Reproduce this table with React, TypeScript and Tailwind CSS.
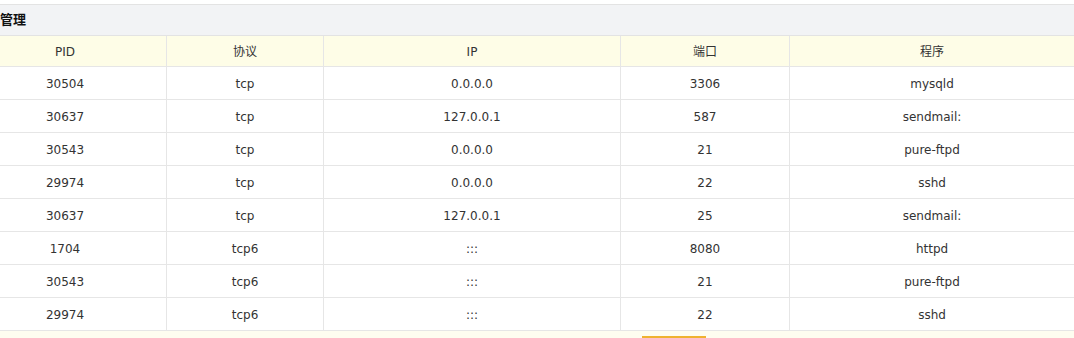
import React from 'react';

const rows = [
  { pid: '30504', proto: 'tcp', ip: '0.0.0.0', port: '3306', prog: 'mysqld' },
  { pid: '30637', proto: 'tcp', ip: '127.0.0.1', port: '587', prog: 'sendmail:' },
  { pid: '30543', proto: 'tcp', ip: '0.0.0.0', port: '21', prog: 'pure-ftpd' },
  { pid: '29974', proto: 'tcp', ip: '0.0.0.0', port: '22', prog: 'sshd' },
  { pid: '30637', proto: 'tcp', ip: '127.0.0.1', port: '25', prog: 'sendmail:' },
  { pid: '1704', proto: 'tcp6', ip: ':::', port: '8080', prog: 'httpd' },
  { pid: '30543', proto: 'tcp6', ip: ':::', port: '21', prog: 'pure-ftpd' },
  { pid: '29974', proto: 'tcp6', ip: ':::', port: '22', prog: 'sshd' },
];

const cols = 'grid grid-cols-[202px_157px_297px_169px_1fr]';
const cell = 'flex items-center justify-center pt-[2px] border-l border-[#e6e6e6] first:border-l-0';

export default function App() {
  return (
    <div
      className="w-[1074px] h-[338px] overflow-hidden bg-white text-[12px] text-[#333]"
      style={{ fontFamily: '"DejaVu Sans", "Noto Sans CJK SC", sans-serif' }}
    >
      <div className="ml-[-36px] w-[1110px] pt-[4px]">
        <div className="h-[32px] border-t border-b border-[#e3e3e3] bg-[#f2f3f5] flex items-center pl-[36px] font-bold text-[13px] text-[#111]">
          管理
        </div>
        <div className={`${cols} h-[31px] bg-[#fefde7] border-b border-[#e6e6e6]`}>
          {['PID', '协议', 'IP', '端口', '程序'].map(h => (
            <div key={h} className={cell}>{h}</div>
          ))}
        </div>
        {rows.map((r, i) => (
          <div key={i} className={`${cols} h-[33px] border-b border-[#e6e6e6]`}>
            <div className={cell}>{r.pid}</div>
            <div className={cell}>{r.proto}</div>
            <div className={cell}>{r.ip}</div>
            <div className={cell}>{r.port}</div>
            <div className={cell}>{r.prog}</div>
          </div>
        ))}
        <div className="h-[8px] bg-[#fefdf0] relative">
          <div className="absolute left-[678px] top-[5px] w-[64px] h-[3px] bg-[#efb22f]" />
        </div>
      </div>
    </div>
  );
}
